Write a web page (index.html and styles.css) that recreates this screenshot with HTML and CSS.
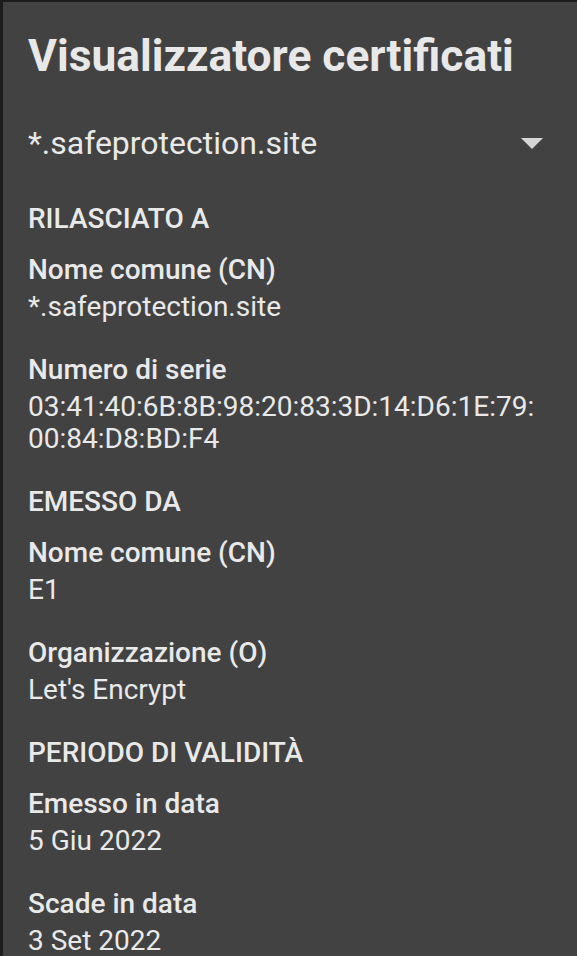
FILE: index.html
```html
<!DOCTYPE html>
<html lang="it">
<head>
<meta charset="utf-8">
<title>Visualizzatore certificati</title>
<link rel="stylesheet" href="styles.css">
</head>
<body>
<div class="dialog">
  <h1 class="title">Visualizzatore certificati</h1>
  <div class="spinner">
    <span class="spinner-text">*.safeprotection.site</span>
    <svg class="arrow" width="22" height="11" viewBox="0 0 22 11"><path d="M0 0 L22 0 L11 11 Z" fill="#d6d6d6"/></svg>
  </div>

  <section class="group">
    <h2 class="header">RILASCIATO A</h2>
    <div class="field">
      <div class="label">Nome comune (CN)</div>
      <div class="value">*.safeprotection.site</div>
    </div>
    <div class="field">
      <div class="label">Numero di serie</div>
      <div class="value">03:41:40:6B:8B:98:20:83:3D:14:D6:1E:79:<br>00:84:D8:BD:F4</div>
    </div>
  </section>

  <section class="group">
    <h2 class="header">EMESSO DA</h2>
    <div class="field">
      <div class="label">Nome comune (CN)</div>
      <div class="value">E1</div>
    </div>
    <div class="field">
      <div class="label">Organizzazione (O)</div>
      <div class="value">Let's Encrypt</div>
    </div>
  </section>

  <section class="group">
    <h2 class="header">PERIODO DI VALIDITÀ</h2>
    <div class="field">
      <div class="label">Emesso in data</div>
      <div class="value">5 Giu 2022</div>
    </div>
    <div class="field">
      <div class="label">Scade in data</div>
      <div class="value">3 Set 2022</div>
    </div>
  </section>
</div>
</body>
</html>
```

FILE: styles.css
```css
html, body {
  margin: 0;
  padding: 0;
  height: 100%;
  overflow: hidden;
}
body {
  background: #1c1c1c;
  font-family: Roboto, "Noto Sans", sans-serif;
  color: #e9e9e9;
}
.dialog {
  margin: 2px 0 0 3px;
  min-height: 960px;
  background: #424242;
  padding: 26px 34px 0 25px;
  box-sizing: border-box;
}
.title {
  margin: 0;
  font-size: 44.3px;
  font-weight: 700;
  line-height: 56px;
  color: #e8e8e8;
}
.spinner {
  margin-top: 35px;
  height: 48px;
  display: flex;
  align-items: center;
  justify-content: space-between;
}
.spinner-text {
  font-size: 32px;
  line-height: 48px;
}
.arrow {
  display: block;
}
.group {
  margin-top: 36px;
}
.group + .group {
  margin-top: 31px;
}
.header {
  margin: 0;
  font-size: 28px;
  font-weight: 500;
  line-height: 32px;
}
.field {
  margin-top: 19px;
}
.field + .field {
  margin-top: 31px;
}
.label {
  font-size: 28px;
  font-weight: 500;
  line-height: 32px;
  margin-bottom: 5px;
}
.value {
  font-size: 28px;
  font-weight: 400;
  line-height: 32px;
}
```
